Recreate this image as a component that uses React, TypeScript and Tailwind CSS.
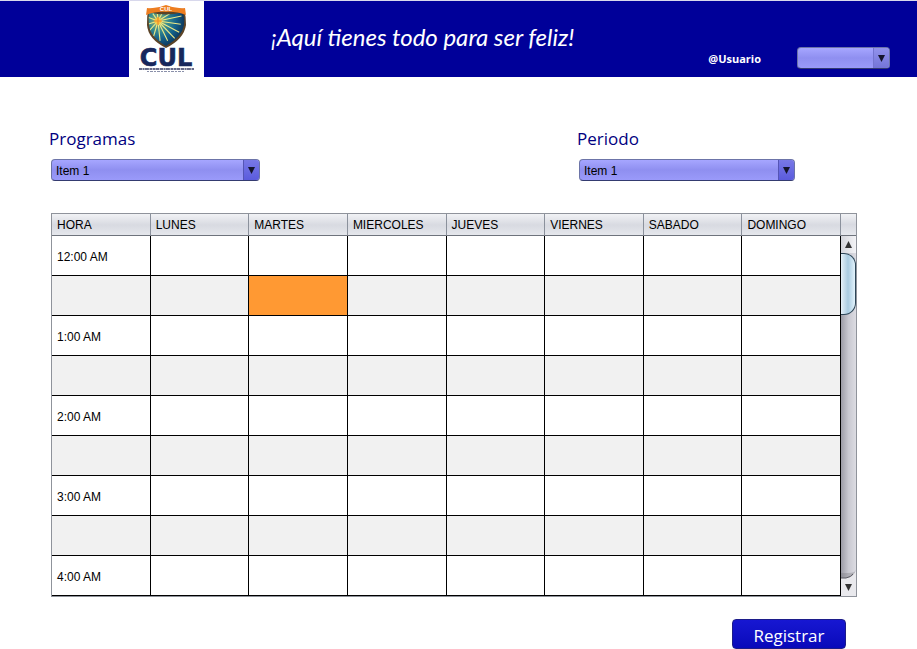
import React from 'react';

const days = ['LUNES', 'MARTES', 'MIERCOLES', 'JUEVES', 'VIERNES', 'SABADO', 'DOMINGO'];
const hours = ['12:00 AM', '', '1:00 AM', '', '2:00 AM', '', '3:00 AM', '', '4:00 AM'];
const rays = [
  [-160, 10], [-125, 9], [-95, 10], [-62, 12], [-32, 20], [-12, 24], [8, 23],
  [28, 24], [46, 24], [64, 22], [84, 20], [106, 16], [132, 13], [162, 10],
];

function Crest() {
  return (
    <svg viewBox="0 0 75 76" className="block h-[76px] w-[75px]" role="img" aria-label="CUL">
      <defs>
        <radialGradient id="sky" cx="0.28" cy="0.3" r="0.75">
          <stop offset="0" stopColor="#b9b659" />
          <stop offset="0.3" stopColor="#3b8f90" />
          <stop offset="0.6" stopColor="#14608a" />
          <stop offset="1" stopColor="#0b2548" />
        </radialGradient>
        <clipPath id="shield">
          <path d="M20 11 Q37 16 54 11 Q56 18 55 24 Q53 36 37 45 Q21 36 20 24 Q19 18 20 11Z" />
        </clipPath>
      </defs>
      <path d="M19 8 Q28 8 37 5 Q46 8 55 8 Q57 15 57 24 Q55 38 37 47 Q19 38 18 24 Q18 15 19 8Z" fill="#5b4327" />
      <g clipPath="url(#shield)">
        <rect x="18" y="8" width="40" height="40" fill="url(#sky)" />
        {rays.map(([a, len]) => (
          <line
            key={a}
            x1="29"
            y1="20"
            x2={29 + len * Math.cos((a * Math.PI) / 180)}
            y2={20 + len * Math.sin((a * Math.PI) / 180)}
            stroke="#f0ea86"
            strokeWidth="1.1"
          />
        ))}
      </g>
      <circle cx="29" cy="20" r="3.2" fill="#f8ca45" />
      <path d="M29 16v8M25 20h8" stroke="#ef8a27" strokeWidth="1.2" />
      <path d="M18 7 Q28 8 37 4 Q46 8 56 7 L57 14 Q46 10 37 11 Q28 10 17 14Z" fill="#ed7d20" />
      <text x="37" y="10" textAnchor="middle" fill="#fff" fontSize="6" fontWeight="700" fontFamily="Liberation Sans, sans-serif">CUL</text>
      <text x="37" y="65" textAnchor="middle" fill="#17275c" stroke="#17275c" strokeWidth="0.6" fontSize="24" fontWeight="700" fontFamily="DejaVu Sans, sans-serif">CUL</text>
      <path d="M10 68H65" stroke="#343a61" strokeWidth="1.5" strokeDasharray="3 .5 2 .4 4 .6" />
      <path d="M18 70.500H56" stroke="#8a90aa" strokeWidth="1" strokeDasharray="2 1 3 1" />
    </svg>
  );
}

type ComboProps = { id: string; width: string; items: string[]; label?: string; pale?: boolean };

function Combo({ id, width, items, label, pale }: ComboProps) {
  return (
    <div className={`relative h-[22px] ${width}`}>
      <select
        id={id}
        aria-label={label}
        className="block h-full w-full appearance-none rounded border border-[#6c74a8] border-b-[#343b70] bg-linear-to-b from-[#a6a6ff] via-[#8f8ff0] to-[#9a9afa] pt-px pr-5 pl-1 text-[12px] text-black"
      >
        {items.map((i) => (
          <option key={i}>{i}</option>
        ))}
      </select>
      <span
        className={`pointer-events-none absolute inset-y-px right-px flex w-4 items-center justify-center rounded-r-[3px] border-l bg-linear-to-b ${
          pale ? 'border-[#7474d0] from-[#9292ec] to-[#7474d8]' : 'border-[#5555b5] from-[#7878e6] to-[#5b5bdd]'
        }`}
      >
        <svg viewBox="0 0 7 7" className="size-[7px]" aria-hidden="true">
          <path d="M0 0H7L3.5 7Z" fill="#15152e" />
        </svg>
      </span>
    </div>
  );
}

function ScrollBar() {
  return (
    <div className="flex w-[15px] shrink-0 flex-col bg-linear-to-r from-[#9c9ca6] via-[#c9c9d1] to-[#dcdce2]">
      <div className="h-[22px] shrink-0 border-b border-[#6e737c] bg-linear-to-b from-[#f1f2f5] via-[#d8dae1] to-[#e6e8ed]" />
      <button type="button" aria-label="Subir" className="flex h-[17px] shrink-0 items-center justify-center bg-linear-to-r from-[#d5d6dc] to-[#f3f3f6]">
        <svg viewBox="0 0 7 7" className="size-[7px]" aria-hidden="true">
          <path d="M0 7H7L3.5 0Z" fill="#333" />
        </svg>
      </button>
      <div className="h-[62px] shrink-0 rounded-r-xl border border-l-0 border-[#2d4657] bg-linear-to-r from-[#e6f1f8] via-[#a9cbe0] to-[#e3f3fc]" />
      <div className="flex-1" />
      <button type="button" aria-label="Bajar" className="block h-[26px]">
        <svg viewBox="0 0 15 26" className="h-[26px] w-[15px]" aria-hidden="true">
          <path d="M0 3H7Q14 3 15 0V8H0Z" fill="#77777f" opacity=".35" />
          <path d="M0 8H5Q13 7 15 0V26H0Z" fill="#e9e9ed" />
          <path d="M0 8H5Q10 7 12 4" fill="none" stroke="#5b5b63" />
          <path d="M4 14H11L7.500 21Z" fill="#333" />
        </svg>
      </button>
    </div>
  );
}

export default function App() {
  return (
    <div className="bg-white font-['Liberation_Sans',Arial,sans-serif] text-black">
      <header className="flex h-[77px] border-t border-[#d8d8ec] bg-[#000099] pr-[27px] pl-[129px] text-white">
        <div className="w-[75px] shrink-0 bg-white">
          <Crest />
        </div>
        <p className="mt-5 ml-[67px] flex-1 font-['Segoe_Script','Lato',cursive] text-[24px] leading-8 whitespace-nowrap italic">
          ¡Aquí tienes todo para ser feliz!
        </p>
        <div className="mt-[46px] flex h-[22px] items-center gap-9">
          <span className="pt-0.5 font-['Open_Sans',sans-serif] text-[11px] font-bold">@Usuario</span>
          <Combo id="usuario" label="Usuario" width="w-[93px]" items={['']} pale />
        </div>
      </header>
      <main className="pt-[50px] pr-[60px] pl-[51px]">
        <div className="flex justify-between pr-[62px] font-['Open_Sans',sans-serif] text-[#000080]">
          <div>
            <label htmlFor="programas" className="-ml-0.5 block h-8 text-[17px] leading-6">Programas</label>
            <Combo id="programas" width="w-[209px] font-['Liberation_Sans',sans-serif]" items={['Item 1', 'Item 2', 'Item 3', 'Item 4']} />
          </div>
          <div>
            <label htmlFor="periodo" className="-ml-0.5 block h-8 text-[17px] leading-6">Periodo</label>
            <Combo id="periodo" width="w-[216px] font-['Liberation_Sans',sans-serif]" items={['Item 1', 'Item 2', 'Item 3', 'Item 4']} />
          </div>
        </div>
        <div className="mt-8 flex border border-[#8f939b]">
          <div className="min-w-0 flex-1">
            <table className="w-full table-fixed border-separate border-spacing-0 text-[12px]">
              <thead>
                <tr className="h-[22px] bg-linear-to-b from-[#f1f2f5] via-[#d8dae1] to-[#e6e8ed]">
                  {['HORA', ...days].map((d) => (
                    <th key={d} scope="col" className="border-r border-b border-[#8b919c] border-b-[#6e737c] p-0 pl-[5px] text-left font-normal">
                      {d}
                    </th>
                  ))}
                </tr>
              </thead>
              <tbody>
                {hours.map((h, r) => (
                  <tr key={r} className="h-10 odd:bg-white even:bg-[#f1f1f1]">
                    <td className="border-r border-b border-black p-0 pt-0.5 pl-[5px]">{h}</td>
                    {days.map((d) => (
                      <td key={d} className={`border-r border-b border-black p-0 ${r === 1 && d === 'MARTES' ? 'bg-[#ff9933]' : ''}`} />
                    ))}
                  </tr>
                ))}
              </tbody>
            </table>
          </div>
          <ScrollBar />
        </div>
        <div className="mt-[22px] flex justify-end pr-[11px]">
          <button type="button" className="h-[30px] w-[114px] rounded border border-[#1c1c8a] bg-linear-to-b from-[#1717d2] to-[#0909ba] pt-1 font-['Open_Sans',sans-serif] text-[17px] leading-6 text-white">
            Registrar
          </button>
        </div>
      </main>
    </div>
  );
}
